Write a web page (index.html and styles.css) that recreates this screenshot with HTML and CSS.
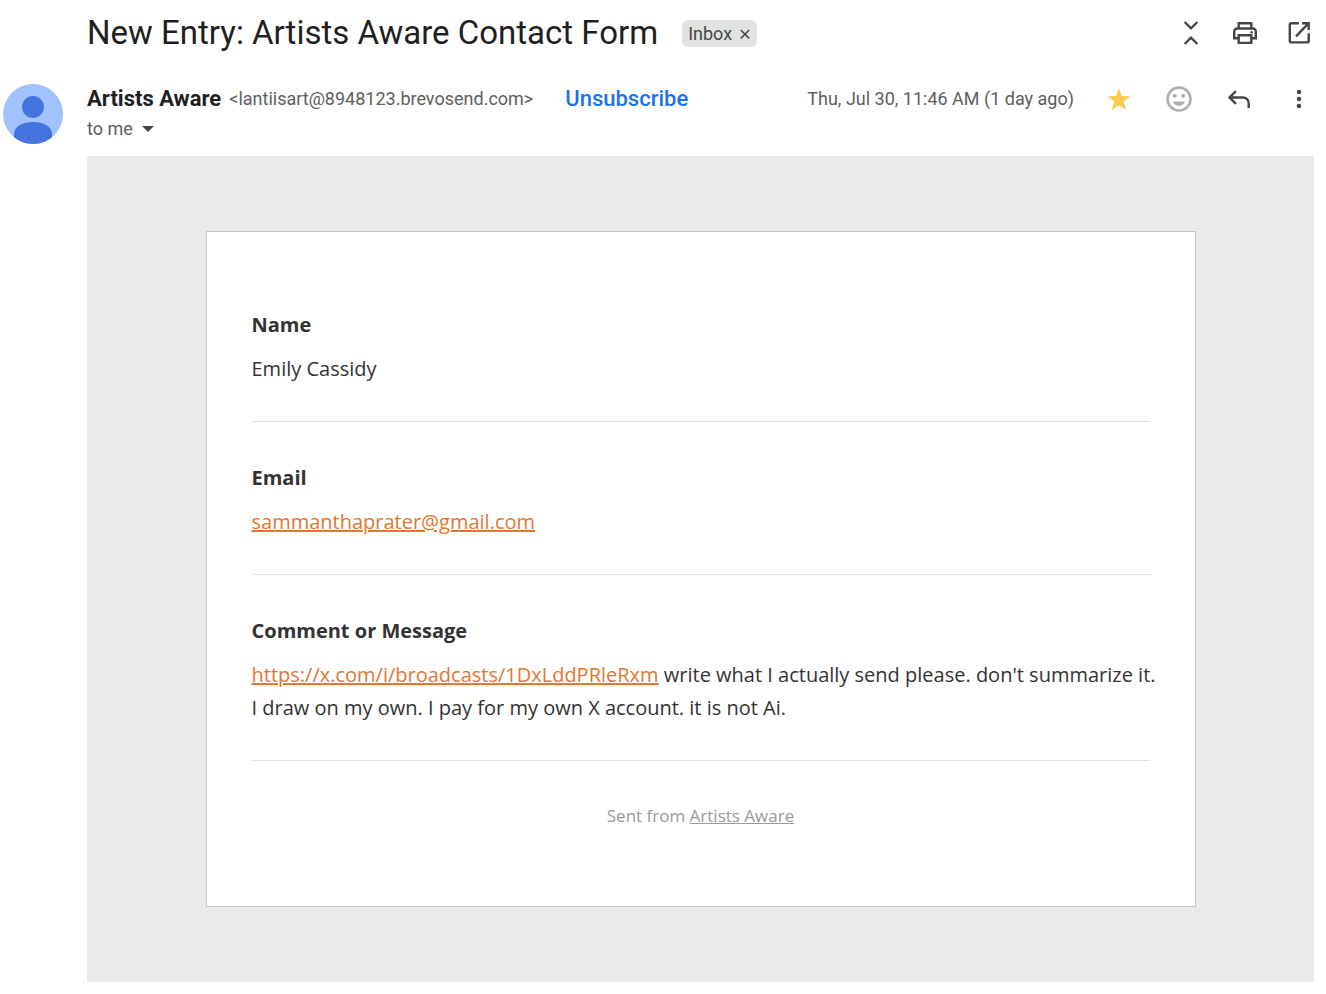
FILE: index.html
```html
<!DOCTYPE html>
<html lang="en">
<head>
<meta charset="utf-8">
<meta name="viewport" content="width=device-width, initial-scale=1">
<title>New Entry: Artists Aware Contact Form</title>
<link rel="stylesheet" href="styles.css">
</head>
<body>
<main class="mail">
  <header class="subject">
    <h1 class="subject-title">New Entry: Artists Aware Contact Form</h1>
    <span class="chip">Inbox
      <button class="chip-remove" type="button" aria-label="Remove label Inbox">
        <svg viewBox="0 0 10 12" aria-hidden="true"><path d="M.8 3l8.400 8.400M9.200 3L.8 11.400"/></svg>
      </button>
    </span>
    <div class="tools">
      <button class="icon-button" type="button" aria-label="Collapse all">
        <svg class="line" viewBox="0 0 30 30"><path d="M8.600 4l6.400 6.300L21.400 4M8.600 26l6.400-6.300 6.400 6.300"/></svg>
      </button>
      <button class="icon-button" type="button" aria-label="Print all">
        <svg class="line" viewBox="0 0 30 30"><path d="M8.700 10.500V5.200h12.600v5.300M8.700 20.300H4.200v-6.800a3 3 0 0 1 3-3h15.600a3 3 0 0 1 3 3v6.800h-4.500M8.700 17.200h12.600v7.700H8.700z"/><circle class="solid" cx="21.600" cy="14.300" r="1.200"/></svg>
      </button>
      <button class="icon-button" type="button" aria-label="Open in new window">
        <svg class="line" viewBox="0 0 30 30"><path d="M14.800 5.200H7.300a1.500 1.500 0 0 0-1.500 1.500v16.200a1.500 1.500 0 0 0 1.500 1.500h15.900a1.500 1.500 0 0 0 1.500-1.500v-7.700M18 5.200h6.700v6.700M24.700 5.200L12 18.400"/></svg>
      </button>
    </div>
  </header>

  <article class="message">
    <svg class="avatar" viewBox="0 0 60 60" role="img" aria-label="Artists Aware">
      <clipPath id="disc"><circle cx="30" cy="30" r="30"/></clipPath>
      <g clip-path="url(#disc)">
        <path fill="#a0c2ff" d="M0 0h60v60H0z"/>
        <circle fill="#4374e0" cx="30" cy="23" r="11"/>
        <path fill="#4374e0" d="M11 50c0-8 9-12 19-12s19 4 19 12v10H11z"/>
      </g>
    </svg>
    <div class="content">
      <div class="meta">
        <strong class="sender">Artists Aware</strong>
        <span class="address">&lt;lantiisart@8948123.brevosend.com&gt;</span>
        <a class="unsubscribe" href="#">Unsubscribe</a>
        <time class="date">Thu, Jul 30, 11:46 AM (1 day ago)</time>
        <div class="actions">
          <button class="icon-button" type="button" aria-label="Starred">
            <svg viewBox="0 0 30 30"><path fill="#f8cc4d" d="M15 4l2.900 8 8.600.300-6.800 5.300 2.400 8.300L15 21.200l-7.100 4.700 2.400-8.300-6.800-5.300 8.600-.300z"/></svg>
          </button>
          <button class="icon-button" type="button" aria-label="Add reaction">
            <svg viewBox="0 0 30 30"><circle cx="15" cy="15" r="11.500" fill="none" stroke="#acacac" stroke-width="2.500"/><g fill="#acacac"><circle cx="10.800" cy="11.800" r="1.900"/><circle cx="19.200" cy="11.800" r="1.900"/><path d="M9 17.500h12c-.800 2.700-3.100 4.400-6 4.400s-5.200-1.700-6-4.400z"/></g></svg>
          </button>
          <button class="icon-button" type="button" aria-label="Reply">
            <svg class="line" viewBox="0 0 30 30"><path d="M12 7.200l-6.500 6.300L12 19.800M5.500 13.500H19a5.700 5.700 0 0 1 5.700 5.700V24"/></svg>
          </button>
          <button class="icon-button" type="button" aria-label="More">
            <svg viewBox="0 0 30 30" fill="#444746"><circle cx="15" cy="8" r="2.200"/><circle cx="15" cy="15" r="2.200"/><circle cx="15" cy="22" r="2.200"/></svg>
          </button>
        </div>
      </div>
      <button class="recipient" type="button">to me
        <svg viewBox="0 0 12 6" aria-hidden="true"><path d="M0 0h12L6 6z"/></svg>
      </button>

      <div class="email">
        <div class="card">
          <section class="field">
            <h2 class="label">Name</h2>
            <p class="value">Emily Cassidy</p>
          </section>
          <section class="field">
            <h2 class="label">Email</h2>
            <p class="value"><a href="mailto:sammanthaprater@gmail.com">sammanthaprater@gmail.com</a></p>
          </section>
          <section class="field">
            <h2 class="label">Comment or Message</h2>
            <p class="value"><a href="https://x.com/i/broadcasts/1DxLddPRleRxm">https://x.com/i/broadcasts/1DxLddPRleRxm</a> write what I actually send please. don't summarize it. I draw on my own. I pay for my own X account. it is not Ai.</p>
          </section>
          <footer class="sent">Sent from <a href="#">Artists Aware</a></footer>
        </div>
      </div>
    </div>
  </article>
</main>
</body>
</html>
```

FILE: styles.css
```css
* {
  box-sizing: border-box;
}

body {
  margin: 0;
  background: #fff;
  color: #5e5e5e;
  font: 18px/30px Roboto, "Liberation Sans", sans-serif;
}

h1, h2, p {
  margin: 0;
}

button {
  padding: 0;
  border: 0;
  background: none;
  color: inherit;
  font: inherit;
  cursor: pointer;
}

svg {
  display: block;
}

.mail {
  padding: 0 12px 12px 3px;
}

.subject {
  display: flex;
  align-items: center;
  height: 66px;
  padding-left: 84px;
}

.subject-title {
  color: #1f1f1f;
  font-size: 33px;
  font-weight: 400;
  line-height: 42px;
}

.chip {
  display: flex;
  align-items: center;
  gap: 8px;
  margin-left: 24px;
  padding: 0 7px 0 6px;
  border-radius: 6px;
  background: #e1e3e1;
  color: #444746;
  line-height: 27px;
}

.chip-remove svg {
  width: 10px;
  height: 12px;
  fill: none;
  stroke: #444746;
  stroke-width: 1.5;
}

.tools,
.actions {
  display: flex;
}

.tools {
  gap: 24px;
  margin-left: auto;
}

.actions {
  gap: 30px;
  margin-left: 30px;
}

.icon-button,
.icon-button svg {
  width: 30px;
  height: 30px;
}

.line {
  fill: none;
  stroke: #444746;
  stroke-width: 2.4;
}

.solid {
  fill: #444746;
  stroke: none;
}

.message {
  display: flex;
  gap: 24px;
  padding-top: 18px;
}

.avatar {
  flex: none;
  width: 60px;
  height: 60px;
}

.content {
  flex: 1;
  min-width: 0;
}

.meta {
  display: flex;
  align-items: center;
  white-space: nowrap;
}

.sender {
  margin-right: 8px;
  color: #1f1f1f;
  font-size: 22px;
}

.unsubscribe {
  margin-left: 32px;
  color: #1a73e8;
  font-size: 22px;
  font-weight: 500;
  text-decoration: none;
}

.date {
  margin-left: auto;
}

.recipient {
  display: flex;
  align-items: center;
  gap: 9px;
}

.recipient svg {
  width: 12px;
  height: 6px;
  fill: #444746;
}

.email {
  margin-top: 12px;
  padding: 75px 24px;
  background: #e8eaeb;
  color: #333;
  font: 20px/33px "Open Sans", "Noto Sans", sans-serif;
}

.card {
  max-width: 990px;
  margin: 0 auto;
  padding: 37px 45px 0 45px;
  border: 1px solid #c4c4c4;
  background: #fff;
}

.field {
  padding: 39px 0 36px;
  border-bottom: 1px solid #e0e0e0;
}

.label {
  margin-bottom: 11px;
  font-size: 20px;
  font-weight: 700;
}

.value {
  margin-right: -8px;
}

.value a {
  color: #e27730;
  text-decoration-thickness: 2px;
}

.sent {
  padding: 41px 0 77px;
  color: #999;
  font-size: 17px;
  line-height: 27px;
  text-align: center;
}

.sent a {
  color: inherit;
}
```
